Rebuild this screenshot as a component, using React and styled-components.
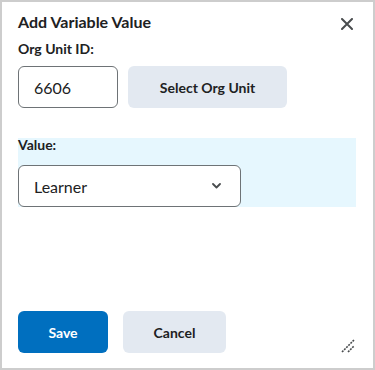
import React from "react";
import styled, { createGlobalStyle } from "styled-components";

const Global = createGlobalStyle`
  html, body { margin: 0; padding: 0; background: #ffffff; }
  body { font-family: Lato, "Noto Sans", sans-serif; color: #202122; }
  * { box-sizing: border-box; }
`;

const Dialog = styled.div`
  position: relative;
  width: 375px;
  height: 370px;
  border: 2px solid #cdcdcd;
  background: #ffffff;
  display: flex;
  flex-direction: column;
  padding: 0 16px 15px 16px;
`;

const Header = styled.div`
  display: flex;
  justify-content: space-between;
  align-items: flex-start;
  height: 29px;
  padding-top: 11px;
`;

const Title = styled.h2`
  margin: 0;
  font-size: 16px;
  line-height: 18px;
  font-weight: 700;
  color: #202122;
`;

const CloseButton = styled.button`
  width: 24px;
  height: 24px;
  margin-top: -1px;
  margin-right: -2px;
  padding: 0;
  border: none;
  background: transparent;
  display: flex;
  align-items: center;
  justify-content: center;
  color: #494c4e;
`;

const Label = styled.label`
  display: block;
  font-size: 14px;
  line-height: 14px;
  font-weight: 700;
  color: #202122;
  margin-top: ${(p) => p.$top || 0}px;
  margin-bottom: ${(p) => p.$bottom || 0}px;
`;

const Row = styled.div`
  display: flex;
  gap: 10px;
`;

const TextInput = styled.div`
  width: 100px;
  height: 42px;
  border: 1px solid #6e7376;
  border-radius: 6px;
  padding: 0 15px;
  display: flex;
  align-items: center;
  font-size: 16px;
  color: #202122;
`;

const Button = styled.button`
  height: 42px;
  width: ${(p) => p.$width}px;
  border: none;
  border-radius: 6px;
  font-family: Lato, "Noto Sans", sans-serif;
  font-size: 14px;
  font-weight: 700;
  background: ${(p) => (p.$primary ? "#006fbf" : "#e3e9f1")};
  color: ${(p) => (p.$primary ? "#ffffff" : "#202122")};
  padding: 0;
`;

const Highlight = styled.div`
  margin-top: 30px;
  margin-right: 1px;
  background: #e6f7fe;
`;

const Select = styled.div`
  width: 223px;
  height: 42px;
  border: 1px solid #6e7376;
  border-radius: 6px;
  background: #ffffff;
  display: flex;
  align-items: center;
  justify-content: space-between;
  padding: 0 19px 0 15px;
  font-size: 16px;
  color: #202122;
`;

const Footer = styled.div`
  margin-top: auto;
  display: flex;
  gap: 15px;
`;

const Grip = styled.svg`
  position: absolute;
  right: 18px;
  bottom: 15px;
`;

export default function App() {
  return (
    <>
      <Global />
      <Dialog>
        <Header>
          <Title>Add Variable Value</Title>
          <CloseButton aria-label="Close">
            <svg width="12" height="12" viewBox="0 0 12 12">
              <path d="M1 1 L11 11 M11 1 L1 11" stroke="#494c4e" strokeWidth="2" strokeLinecap="round" />
            </svg>
          </CloseButton>
        </Header>
        <Label $top={11} $bottom={10}>Org Unit ID:</Label>
        <Row>
          <TextInput>6606</TextInput>
          <Button $width={159}>Select Org Unit</Button>
        </Row>
        <Highlight>
          <Label $top={0} $bottom={13}>Value:</Label>
          <Select>
            <span>Learner</span>
            <svg width="9" height="6" viewBox="0 0 9 6">
              <path d="M1 1 L4.5 4.5 L8 1" fill="none" stroke="#494c4e" strokeWidth="1.8" strokeLinecap="round" strokeLinejoin="round" />
            </svg>
          </Select>
        </Highlight>
        <Footer>
          <Button $primary $width={90}>Save</Button>
          <Button $width={103}>Cancel</Button>
        </Footer>
        <Grip width="14" height="14" viewBox="0 0 14 14">
          <path d="M1 13 L13 1" stroke="#494c4e" strokeWidth="1.6" strokeDasharray="2 1" />
          <path d="M7 13 L13 7" stroke="#494c4e" strokeWidth="1.6" strokeDasharray="2 1" />
        </Grip>
      </Dialog>
    </>
  );
}
